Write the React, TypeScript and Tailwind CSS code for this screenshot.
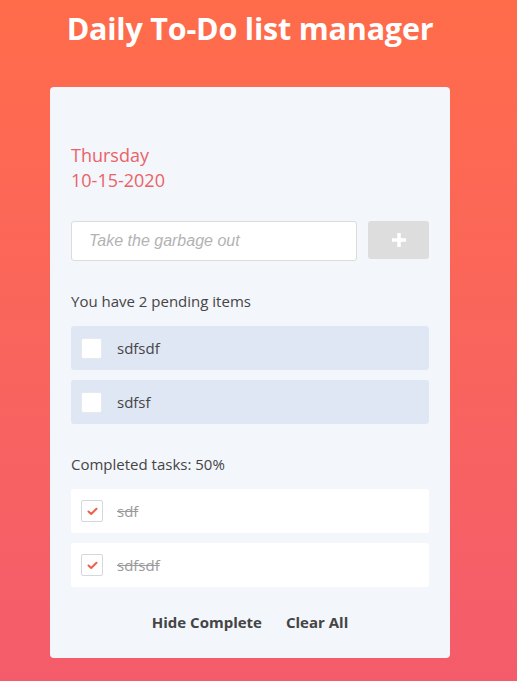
const PENDING = ["sdfsdf", "sdfsf"];
const DONE = ["sdf", "sdfsdf"];

function Check() {
  return (
    <svg width="11" height="9" viewBox="0 0 11 9" fill="none">
      <path d="M1.5 4.5 L4.2 7 L9.5 1.8" stroke="#ee6148" strokeWidth="2" strokeLinecap="round" strokeLinejoin="round" />
    </svg>
  );
}

export default function App() {
  return (
    <div
      className="min-h-[681px] w-full pr-[17px] bg-gradient-to-b from-[#ff6c4a] to-[#f45c6b] flex flex-col items-center"
      style={{ fontFamily: '"Open Sans", sans-serif' }}
    >
      <h1 className="text-[30.5px] leading-[40px] font-bold text-white mt-[8px] tracking-[-0.2px]">
        Daily To-Do list manager
      </h1>

      <div className="mt-[39px] w-[400px] bg-[#f3f6fb] rounded-[4px] px-[21px] pt-[56px] pb-[24px]">
        {/* Date */}
        <div className="text-[#ea6367] text-[18px] leading-[25px]">
          <p>Thursday</p>
          <p>10-15-2020</p>
        </div>

        {/* Add row */}
        <div className="flex gap-[11px] mt-[28px]">
          <input
            placeholder="Take the garbage out"
            className="h-[40px] w-[286px] bg-white border border-[#dcdcdc] rounded-[3px] px-[17px] text-[16px] italic placeholder:text-[#b3b3b3] outline-none"
            style={{ fontFamily: '"Liberation Sans", Arial, sans-serif' }}
          />
          <button className="h-[38px] w-[61px] bg-[#dddddd] rounded-[3px] flex items-center justify-center">
            <svg width="18" height="18" viewBox="0 0 18 18">
              <path d="M9 2 V16 M2 9 H16" stroke="white" strokeWidth="3.5" />
            </svg>
          </button>
        </div>

        {/* Pending */}
        <p className="mt-[30px] text-[15px] leading-[20px] text-[#454545]">You have 2 pending items</p>
        <div className="mt-[15px] flex flex-col gap-[10px]">
          {PENDING.map((t) => (
            <div key={t} className="h-[44px] bg-[#e0e7f4] rounded-[3px] flex items-center px-[10px]">
              <span className="w-[21px] h-[21px] bg-white rounded-[2px] border border-[#e6e9ef]" />
              <span className="ml-[15px] text-[15px] text-[#454545]">{t}</span>
            </div>
          ))}
        </div>

        {/* Completed */}
        <p className="mt-[30px] text-[15px] leading-[20px] text-[#454545]">Completed tasks: 50%</p>
        <div className="mt-[15px] flex flex-col gap-[10px]">
          {DONE.map((t, i) => (
            <div key={i} className="h-[44px] bg-white rounded-[3px] flex items-center px-[10px]">
              <span className="w-[22px] h-[22px] bg-white rounded-[2px] border border-[#d4d7dd] flex items-center justify-center">
                <Check />
              </span>
              <span className="ml-[14px] text-[15px] text-[#9a9a9a] line-through">{t}</span>
            </div>
          ))}
        </div>

        {/* Actions */}
        <div className="mt-[24px] flex justify-center gap-[24px] text-[15px] font-bold text-[#444444]">
          <button>Hide Complete</button>
          <button>Clear All</button>
        </div>
      </div>
    </div>
  );
}
